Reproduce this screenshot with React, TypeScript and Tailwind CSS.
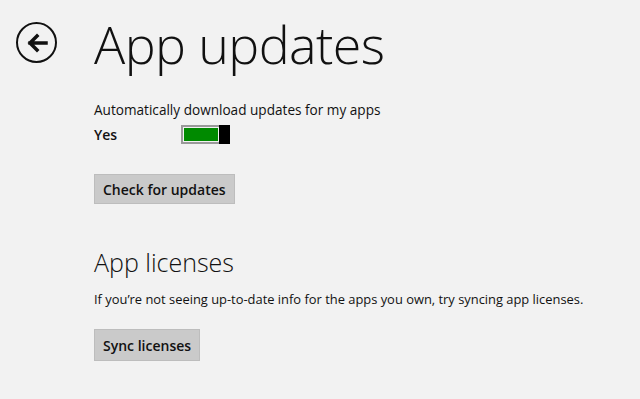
export default function App() {
  return (
    <div className="w-[640px] h-[399px] overflow-hidden bg-[#f2f2f2] text-[#111] font-['Open_Sans',sans-serif] flex">
      <div className="w-[94px] shrink-0 pl-[16px] pt-[22px]">
        <button className="w-[41px] h-[41px] rounded-full border-2 border-[#111] flex items-center justify-center">
          <svg width="24" height="20" viewBox="0 0 24 20">
            <path d="M21 10H5M12 3l-7 7 7 7" fill="none" stroke="#111" strokeWidth="3.5" strokeLinecap="square" />
          </svg>
        </button>
      </div>
      <div className="flex-1 flex flex-col">
        <h1 className="text-[52px] font-light leading-none mt-[18px] tracking-[-0.6px]">App updates</h1>
        <p className="text-[13.6px] mt-[31px] leading-[18px]">Automatically download updates for my apps</p>
        <div className="flex items-center mt-[5px]">
          <span className="text-[14px] font-semibold w-[87px]">Yes</span>
          <div className="flex items-stretch h-[19px] w-[49px] border-2 border-[#9a9a9a] bg-[#f2f2f2]">
            <div className="flex-1 m-[1px] bg-[#008a00]" />
            <div className="w-[11px] -my-[2px] -mr-[2px] bg-black" />
          </div>
        </div>
        <button className="self-start mt-[29px] h-[30px] px-[8px] bg-[#cacaca] border border-[#bdbdbd] text-[14px] font-semibold">Check for updates</button>
        <h2 className="text-[25px] font-light mt-[46px] leading-none">App licenses</h2>
        <p className="text-[12.9px] mt-[15px]">If you’re not seeing up-to-date info for the apps you own, try syncing app licenses.</p>
        <button className="self-start mt-[20px] h-[32px] px-[8px] bg-[#cacaca] border border-[#bdbdbd] text-[14px] font-semibold">Sync licenses</button>
      </div>
    </div>
  )
}
